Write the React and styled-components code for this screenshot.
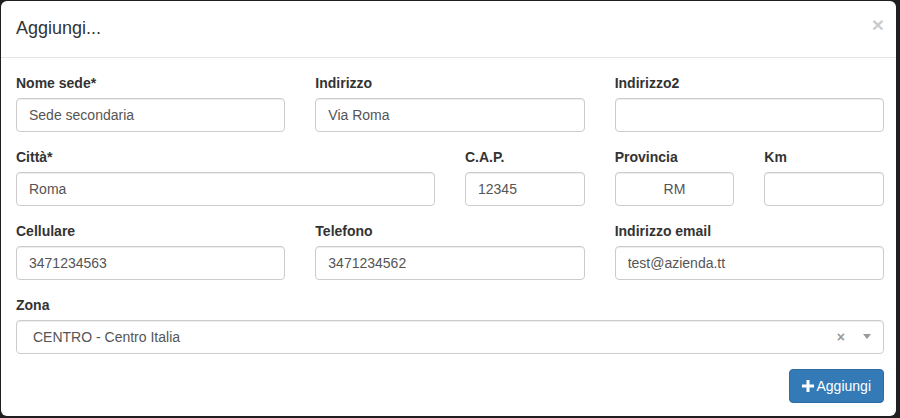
import React from "react";
import styled, { createGlobalStyle } from "styled-components";

const GlobalStyle = createGlobalStyle`
  html, body {
    margin: 0;
    padding: 0;
    background: #1f1f1f;
    height: 418px;
    overflow: hidden;
    font-family: "Liberation Sans", Arial, sans-serif;
    font-size: 14px;
    color: #333;
  }
  * { box-sizing: border-box; }
`;

const Modal = styled.div`
  margin: 1px 0 0 1px;
  width: 895px;
  height: 415px;
  background: #fff;
  border-radius: 6px;
  overflow: hidden;
`;

const Header = styled.div`
  display: flex;
  align-items: flex-start;
  justify-content: space-between;
  padding: 15px 12px 15px 15px;
  border-bottom: 1px solid #e5e5e5;
`;

const Title = styled.h4`
  margin: 0;
  font-size: 18px;
  font-weight: 500;
  line-height: 1.42857;
  color: #333;
`;

const Close = styled.button`
  border: 0;
  background: transparent;
  padding: 0;
  margin-top: -2px;
  font-family: "Liberation Sans", Arial, sans-serif;
  font-size: 21px;
  font-weight: 700;
  line-height: 1;
  color: #000;
  opacity: 0.2;
  cursor: pointer;
`;

const Body = styled.div`
  padding: 15px 12px 12px 15px;
`;

const Grid = styled.div`
  display: grid;
  grid-template-columns: repeat(12, 1fr);
  column-gap: 30px;
`;

const Group = styled.div`
  grid-column: span ${(p) => p.span};
  margin-bottom: 15px;
`;

const Label = styled.label`
  display: block;
  font-weight: 700;
  line-height: 20px;
  margin-bottom: 5px;
`;

const Input = styled.input`
  display: block;
  width: 100%;
  height: 34px;
  padding: 6px 12px;
  font-family: "Liberation Sans", Arial, sans-serif;
  font-size: 14px;
  line-height: 1.42857;
  color: #555;
  background: #fff;
  border: 1px solid #ccc;
  border-radius: 4px;
  box-shadow: inset 0 1px 1px rgba(0, 0, 0, 0.075);
  text-align: ${(p) => (p.$center ? "center" : "left")};
  outline: none;
`;

const Select = styled.div`
  display: flex;
  align-items: center;
  height: 34px;
  padding: 0 12px 0 16px;
  border: 1px solid #ccc;
  border-radius: 4px;
  box-shadow: inset 0 1px 1px rgba(0, 0, 0, 0.075);
  color: #555;
`;

const SelectValue = styled.span`
  flex: 1;
`;

const Clear = styled.span`
  color: #999;
  font-weight: 700;
  font-size: 14px;
  margin-right: 18px;
`;

const Caret = styled.span`
  width: 0;
  height: 0;
  border-left: 4px solid transparent;
  border-right: 4px solid transparent;
  border-top: 5px solid #999;
`;

const Actions = styled.div`
  display: flex;
  justify-content: flex-end;
`;

const Button = styled.button`
  display: inline-flex;
  align-items: center;
  gap: 3px;
  height: 34px;
  padding: 6px 12px;
  font-family: "Liberation Sans", Arial, sans-serif;
  font-size: 14px;
  color: #fff;
  background: #337ab7;
  border: 1px solid #2e6da4;
  border-radius: 4px;
  cursor: pointer;
`;

function PlusIcon() {
  return (
    <svg width="12" height="12" viewBox="0 0 12 12">
      <path d="M4.5 0h3v4.5H12v3H7.5V12h-3V7.5H0v-3h4.5z" fill="#fff" />
    </svg>
  );
}

function Field({ span, label, value, center }) {
  return (
    <Group span={span}>
      <Label>{label}</Label>
      <Input defaultValue={value} $center={center} />
    </Group>
  );
}

export default function App() {
  return (
    <>
      <GlobalStyle />
      <Modal>
        <Header>
          <Title>Aggiungi...</Title>
          <Close>×</Close>
        </Header>
        <Body>
          <Grid>
            <Field span={4} label="Nome sede*" value="Sede secondaria" />
            <Field span={4} label="Indirizzo" value="Via Roma" />
            <Field span={4} label="Indirizzo2" value="" />

            <Field span={6} label="Città*" value="Roma" />
            <Field span={2} label="C.A.P." value="12345" />
            <Field span={2} label="Provincia" value="RM" center />
            <Field span={2} label="Km" value="" />

            <Field span={4} label="Cellulare" value="3471234563" />
            <Field span={4} label="Telefono" value="3471234562" />
            <Field span={4} label="Indirizzo email" value="test@azienda.tt" />

            <Group span={12}>
              <Label>Zona</Label>
              <Select>
                <SelectValue>CENTRO - Centro Italia</SelectValue>
                <Clear>×</Clear>
                <Caret />
              </Select>
            </Group>
          </Grid>
          <Actions>
            <Button>
              <PlusIcon />
              Aggiungi
            </Button>
          </Actions>
        </Body>
      </Modal>
    </>
  );
}
